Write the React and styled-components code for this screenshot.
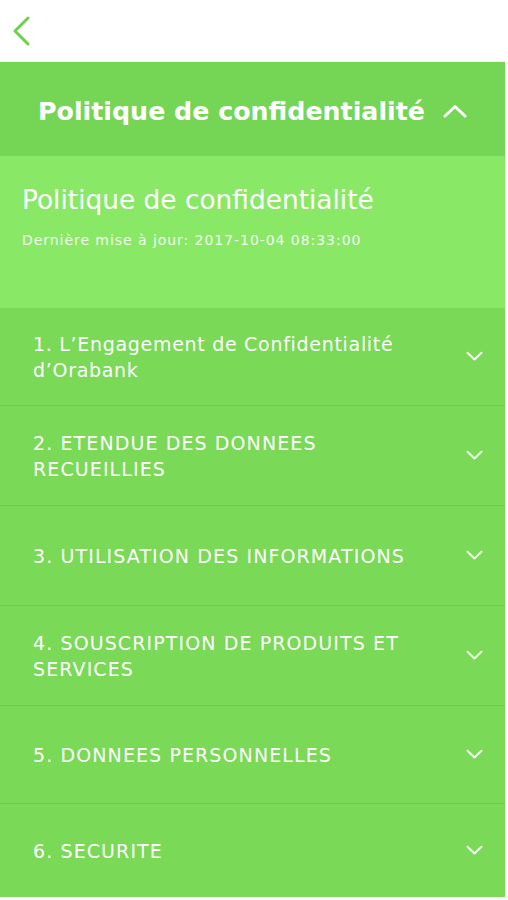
import styled, { createGlobalStyle } from "styled-components";

const GlobalStyle = createGlobalStyle`
  html, body {
    margin: 0;
    padding: 0;
    background: #ffffff;
  }
  body {
    font-family: "DejaVu Sans", "Open Sans", sans-serif;
  }
`;

const Page = styled.div`
  width: 505px;
  min-height: 897px;
  display: flex;
  flex-direction: column;
`;

const TopBar = styled.header`
  height: 62px;
  background: #ffffff;
  display: flex;
  align-items: center;
  padding-left: 11px;
  border-bottom: 1px solid #eef3ec;
  box-sizing: border-box;
`;

const BackButton = styled.button`
  background: none;
  border: 0;
  padding: 0;
  width: 24px;
  height: 32px;
  cursor: pointer;
  display: flex;
  align-items: center;
`;

const TitleBar = styled.div`
  height: 94px;
  background: #75d555;
  display: flex;
  align-items: center;
  justify-content: center;
  gap: 18px;
  padding-top: 4px;
  box-sizing: border-box;
  color: #ffffff;
`;

const Title = styled.h1`
  margin: 0;
  font-size: 25.3px;
  font-weight: 700;
`;

const Intro = styled.section`
  height: 152px;
  background: #89e866;
  box-sizing: border-box;
  padding: 28px 22px 0;
  color: #ffffff;
`;

const IntroTitle = styled.h2`
  margin: 0;
  font-size: 26.4px;
  font-weight: 400;
  line-height: 32px;
`;

const Updated = styled.p`
  margin: 16px 0 0;
  font-size: 14px;
  letter-spacing: 0.95px;
  color: #f3fdef;
`;

const List = styled.div`
  display: flex;
  flex-direction: column;
  background: #7ad957;
`;

const Item = styled.div`
  height: ${(props) => props.h}px;
  box-sizing: border-box;
  display: flex;
  align-items: center;
  justify-content: space-between;
  padding: 0 22px 0 33px;
  border-bottom: ${(props) => (props.last ? "none" : "1px solid #6fcd4c")};
  color: #ffffff;
`;

const ItemLabel = styled.span`
  max-width: 408px;
  font-size: 19px;
  line-height: 26px;
  letter-spacing: ${(props) => (props.caps ? "1.1px" : "0.7px")};
  font-weight: 500;
`;

const ChevronDown = () => (
  <svg width="17" height="11" viewBox="0 0 17 11" fill="none">
    <path
      d="M1.5 1.8l7 6.6 7-6.6"
      stroke="#f4fdf0"
      strokeWidth="2"
      strokeLinecap="round"
      strokeLinejoin="round"
    />
  </svg>
);

const ChevronUp = () => (
  <svg width="24" height="14" viewBox="0 0 24 14" fill="none">
    <path
      d="M2 12L12 2.5 22 12"
      stroke="#ffffff"
      strokeWidth="3"
      strokeLinecap="round"
      strokeLinejoin="round"
    />
  </svg>
);

const sections = [
  { label: "1. L’Engagement de Confidentialité d’Orabank", h: 98 },
  { label: "2. ETENDUE DES DONNEES RECUEILLIES", h: 100, caps: true },
  { label: "3. UTILISATION DES INFORMATIONS", h: 100, caps: true },
  { label: "4. SOUSCRIPTION DE PRODUITS ET SERVICES", h: 100, caps: true },
  { label: "5. DONNEES PERSONNELLES", h: 98, caps: true },
  { label: "6. SECURITE", h: 93, caps: true },
];

export default function App() {
  return (
    <Page>
      <GlobalStyle />
      <TopBar>
        <BackButton aria-label="Retour">
          <svg width="22" height="32" viewBox="0 0 22 32" fill="none">
            <path
              d="M17 3L4 16l13 13"
              stroke="#6fd14b"
              strokeWidth="3"
              strokeLinecap="round"
              strokeLinejoin="round"
            />
          </svg>
        </BackButton>
      </TopBar>
      <TitleBar>
        <Title>Politique de confidentialité</Title>
        <ChevronUp />
      </TitleBar>
      <Intro>
        <IntroTitle>Politique de confidentialité</IntroTitle>
        <Updated>Dernière mise à jour: 2017-10-04 08:33:00</Updated>
      </Intro>
      <List>
        {sections.map((s, i) => (
          <Item key={s.label} h={s.h} last={i === sections.length - 1}>
            <ItemLabel caps={s.caps}>{s.label}</ItemLabel>
            <ChevronDown />
          </Item>
        ))}
      </List>
    </Page>
  );
}
